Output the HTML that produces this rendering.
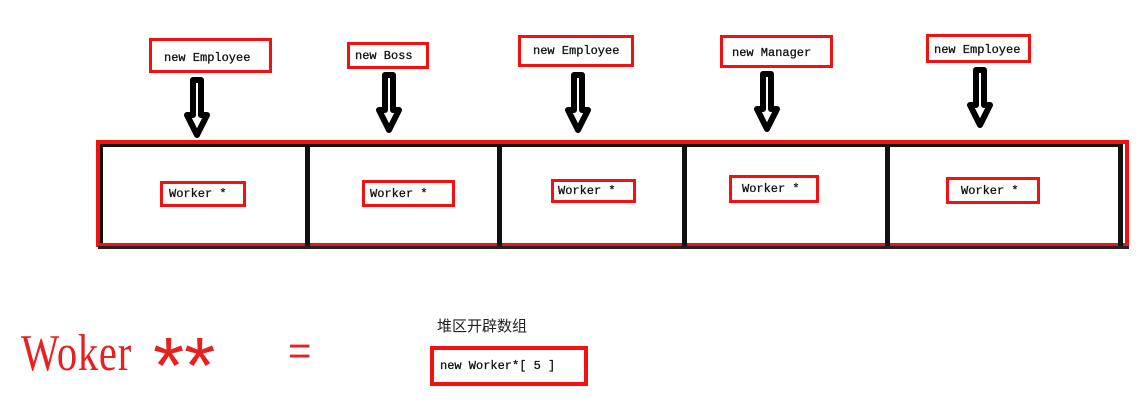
<!DOCTYPE html>
<html><head><meta charset="utf-8"><style>
*{margin:0;padding:0;box-sizing:border-box}
body{width:1145px;height:400px;background:#fff;position:relative;overflow:hidden;font-family:"Liberation Mono","Noto Sans CJK SC",monospace}
.b{position:absolute;border:3px solid #f41010;background:#fff;font-size:12px;color:#111;white-space:nowrap;padding-left:8px;display:flex;align-items:center;-webkit-text-stroke:0.3px #111}
.d{position:absolute;background:#111;width:5px;top:144px;height:102px}
svg{position:absolute;left:0;top:0}
</style></head><body>
<div style="position:absolute;left:96px;top:140px;width:1033px;height:107px;border:4px solid #f41010;"></div>
<div style="position:absolute;left:100px;top:144px;width:1021px;height:3px;background:#111"></div>
<div style="position:absolute;left:100px;top:144px;width:3px;height:99px;background:#111"></div>
<div style="position:absolute;left:98px;top:246px;width:1031px;height:3px;background:#222"></div>
<div class="d" style="left:1118px"></div>
<div class="d" style="left:305px"></div>
<div class="d" style="left:497px"></div>
<div class="d" style="left:682px"></div>
<div class="d" style="left:885px"></div>

<div class="b" style="left:149px;top:38px;width:123px;height:35px;padding-left:12px;padding-top:4px">new Employee</div>
<div class="b" style="left:347px;top:42px;width:82px;height:27px;padding-left:5px">new Boss</div>
<div class="b" style="left:518px;top:35px;width:116px;height:32px;padding-left:12px">new Employee</div>
<div class="b" style="left:720px;top:35px;width:113px;height:33px;padding-left:9px;padding-top:3px">new Manager</div>
<div class="b" style="left:926px;top:34px;width:105px;height:29px;padding-left:5px;padding-top:2px">new Employee</div>

<div class="b" style="left:160px;top:181px;width:86px;height:26px;padding-left:6px">Worker *</div>
<div class="b" style="left:362px;top:180px;width:93px;height:27px;padding-left:5px">Worker *</div>
<div class="b" style="left:551px;top:179px;width:85px;height:24px;padding-left:4px">Worker *</div>
<div class="b" style="left:729px;top:175px;width:90px;height:28px;padding-left:10px">Worker *</div>
<div class="b" style="left:946px;top:177px;width:94px;height:27px;padding-left:12px">Worker *</div>

<svg width="1145" height="400">
<g fill="#fff" stroke="#000" stroke-width="6" stroke-linejoin="round">
<path id="a" d="M193,80 h8 v35 h6 l-10,20 l-10,-20 h6 z"/>
<use href="#a" transform="translate(192,-5)"/>
<use href="#a" transform="translate(381,-5)"/>
<use href="#a" transform="translate(570,-6)"/>
<use href="#a" transform="translate(783,-10)"/>
</g>
</svg>

<div style="position:absolute;left:21px;top:326px;font-family:'Liberation Serif',serif;font-size:52px;color:#e82020;line-height:56px;letter-spacing:1px;transform:scaleX(0.78);transform-origin:0 0">Woker</div>
<div style="position:absolute;left:153px;top:326px;font-family:'Liberation Sans',sans-serif;font-size:80px;color:#e82020;line-height:80px;letter-spacing:0px">**</div>
<div style="position:absolute;left:288px;top:326px;font-family:'Liberation Sans',sans-serif;font-size:40px;color:#e82020;line-height:50px">=</div>
<div style="position:absolute;left:437px;top:315px;font-family:'Noto Sans CJK SC',sans-serif;font-size:15px;color:#222;line-height:22px">堆区开辟数组</div>
<div class="b" style="left:430px;top:346px;width:158px;height:40px;padding-left:6px;border-width:4px">new Worker*[ 5 ]</div>
</body></html>
